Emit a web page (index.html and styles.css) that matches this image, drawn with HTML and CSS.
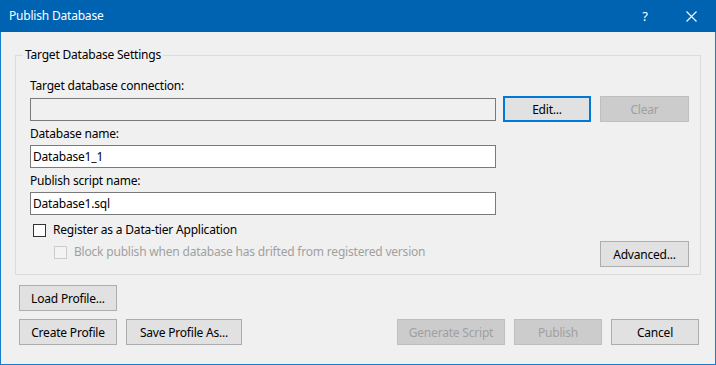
FILE: index.html
```html
<!DOCTYPE html>
<html>
<head>
<meta charset="utf-8">
<title>Publish Database</title>
<link rel="stylesheet" href="styles.css">
</head>
<body>
<div class="window">
  <header class="titlebar">
    <span class="title">Publish Database</span>
    <div class="controls">
      <span class="ctl help">?</span>
      <span class="ctl close">
        <svg width="11" height="11" viewBox="0 0 11 11"><path d="M0.5 0.5 L10.5 10.5 M10.5 0.5 L0.5 10.5" stroke="#fff" stroke-width="1.1" fill="none"/></svg>
      </span>
    </div>
  </header>
  <main class="content">
    <fieldset class="group">
      <legend class="legend">Target Database Settings</legend>
      <div class="lbl">Target database connection:</div>
      <div class="conn-row">
        <input class="tb tb-ro" readonly>
        <button class="btn btn-focus btn-edit">Edit...</button>
        <button class="btn btn-clear" disabled>Clear</button>
      </div>
      <div class="lbl lbl-gap">Database name:</div>
      <input class="tb tb-field" value="Database1_1">
      <div class="lbl lbl-gap2">Publish script name:</div>
      <input class="tb tb-field" value="Database1.sql">
      <label class="chk chk-main"><span class="box"></span><span>Register as a Data-tier Application</span></label>
      <div class="last-row">
        <label class="chk chk-sub disabled"><span class="box"></span><span>Block publish when database has drifted from registered version</span></label>
        <button class="btn btn-adv">Advanced...</button>
      </div>
    </fieldset>
    <div class="bottom">
      <div class="brow">
        <button class="btn w98">Load Profile...</button>
      </div>
      <div class="brow split">
        <div class="bgroup">
          <button class="btn w98">Create Profile</button>
          <button class="btn w116">Save Profile As...</button>
        </div>
        <div class="bgroup">
          <button class="btn w108" disabled>Generate Script</button>
          <button class="btn w88" disabled>Publish</button>
          <button class="btn w88">Cancel</button>
        </div>
      </div>
    </div>
  </main>
</div>
</body>
</html>
```
FILE: styles.css
```css
* { box-sizing: border-box; }
html, body { margin: 0; padding: 0; }
body {
  width: 716px;
  height: 365px;
  overflow: hidden;
  font-family: "Noto Sans", "Open Sans", sans-serif;
  font-size: 12px;
  letter-spacing: -0.2px;
  color: #000;
  background: #F0F0F0;
}
.window {
  width: 716px;
  height: 365px;
  display: flex;
  flex-direction: column;
  border: 1px solid #1A7BCD;
  border-top: none;
  background: #F0F0F0;
}
.titlebar {
  height: 32px;
  margin: 0 -1px;
  background: #0063B1;
  color: #fff;
  display: flex;
  align-items: center;
  justify-content: space-between;
  padding-left: 9px;
  flex: none;
}
.title { font-size: 12px; line-height: 16px; }
.controls { display: flex; height: 32px; padding-right: 2px; }
.ctl {
  width: 46px;
  height: 32px;
  display: flex;
  align-items: center;
  justify-content: center;
}
.help { font-size: 13px; }
.content {
  flex: 1;
  padding: 15px 14px 0 14px;
}
.group {
  margin: 0;
  border: 1px solid #DCDCDC;
  padding: 14px 11px 7px 14px;
  width: 686px;
}
.legend {
  padding: 0 2px;
  margin-left: -7px;
  line-height: 16px;
  font-size: 12px;
}
.lbl { line-height: 16px; margin-top: 1px; margin-bottom: 2px; }
.lbl-gap { margin-top: 4px; margin-bottom: 3px; }
.lbl-gap2 { margin-top: 5px; margin-bottom: 3px; }
.conn-row { display: flex; align-items: center; height: 26px; }
.tb {
  display: block;
  width: 466px;
  height: 23px;
  border: 1px solid #7A7A7A;
  background: #fff;
  font: inherit;
  letter-spacing: inherit;
  padding: 0 2px;
  margin: 0;
  color: #000;
  outline: none;
}
.tb-ro { background: #F0F0F0; }
.btn {
  height: 26px;
  border: 1px solid #ADADAD;
  background: #E1E1E1;
  font: inherit;
  letter-spacing: inherit;
  color: #000;
  padding: 0;
  margin: 0;
  text-align: center;
}
.btn:disabled {
  background: #CCCCCC;
  border-color: #BFBFBF;
  color: #A0A0A0;
}
.btn-focus { border: 2px solid #0078D7; }
.btn-edit { width: 88px; margin-left: 7px; }
.btn-clear { width: 89px; margin-left: 9px; }
.btn-adv { width: 89px; }
.chk {
  display: flex;
  align-items: center;
  line-height: 16px;
}
.box {
  width: 13px;
  height: 13px;
  border: 1px solid #333333;
  background: #fff;
  margin-right: 7px;
  flex: none;
}
.chk-main { margin: 7px 0 0 3px; }
.chk-sub { margin: 3px 0 0 24px; }
.disabled { color: #A0A0A0; }
.disabled .box { border-color: #CCCCCC; background: #F3F3F3; }
.last-row {
  display: flex;
  justify-content: space-between;
  align-items: flex-start;
  margin-top: 3px;
}
.bottom { padding: 10px 2px 0 4px; }
.brow { display: flex; }
.brow + .brow { margin-top: 8px; }
.split { justify-content: space-between; }
.bgroup { display: flex; gap: 9px; }
.w98 { width: 98px; }
.w116 { width: 116px; }
.w108 { width: 108px; }
.w88 { width: 88px; }
```
